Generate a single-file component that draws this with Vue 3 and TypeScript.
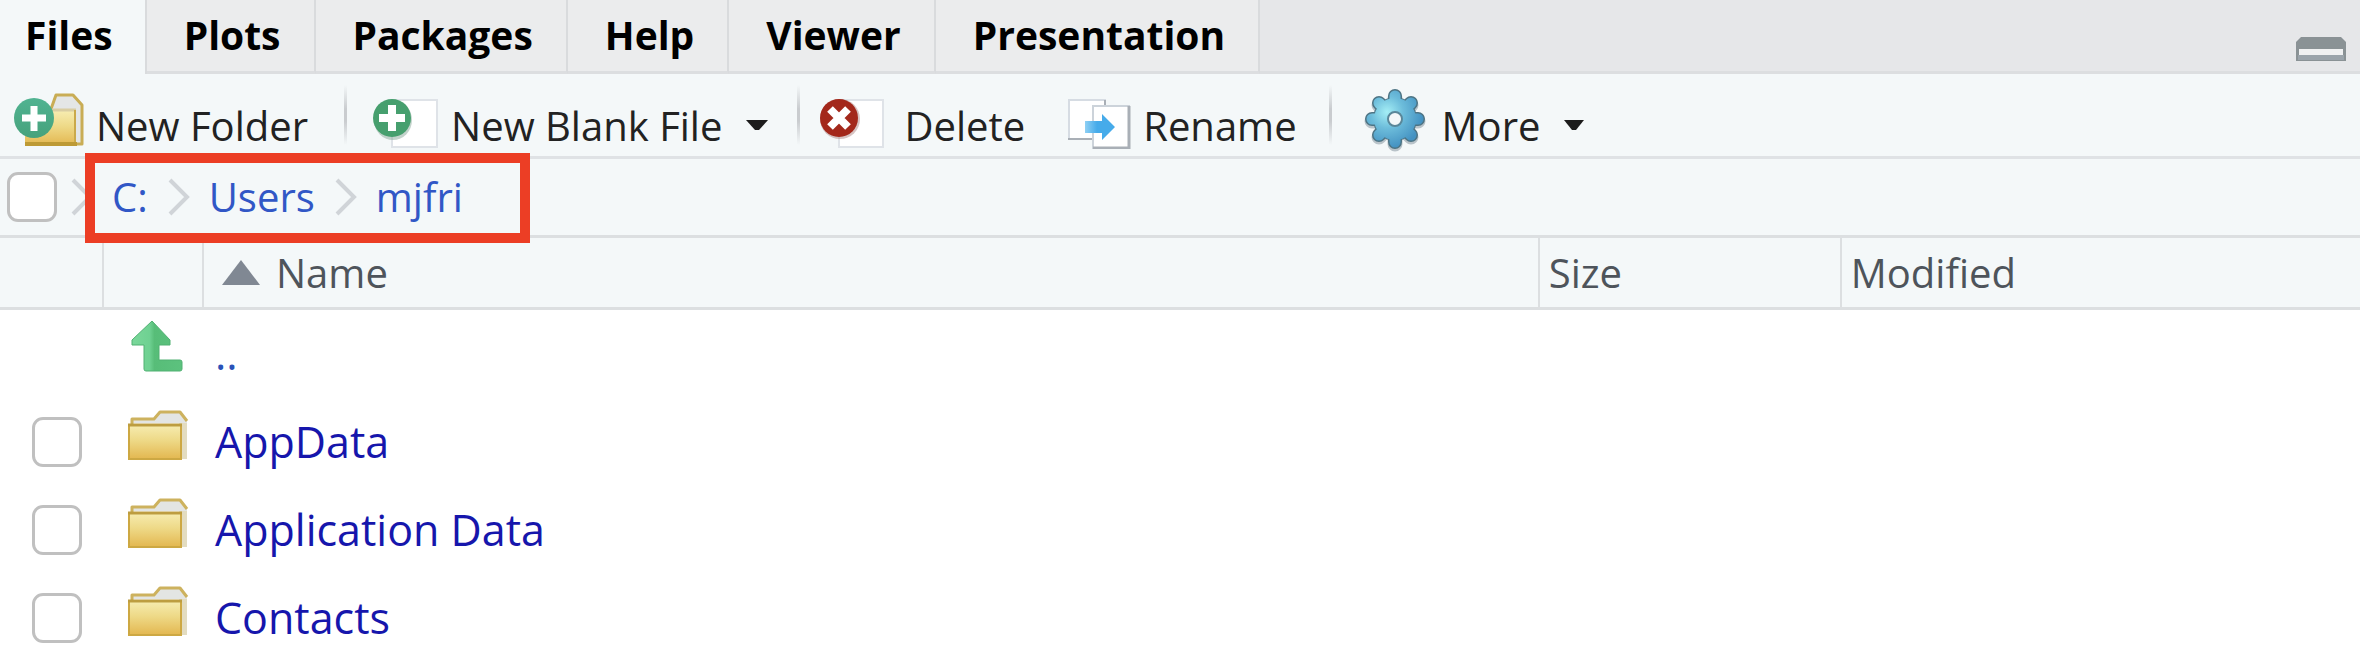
<script setup lang="ts">
import { ref } from 'vue'

interface Entry {
  name: string
  selected: boolean
}

const tabs = ['Files', 'Plots', 'Packages', 'Help', 'Viewer', 'Presentation']
const activeTab = ref('Files')
const crumbs = ['C:', 'Users', 'mjfri']
const selectAll = ref(false)
const entries = ref<Entry[]>([
  { name: 'AppData', selected: false },
  { name: 'Application Data', selected: false },
  { name: 'Contacts', selected: false },
])

function toggleAll() {
  entries.value.forEach((entry) => (entry.selected = selectAll.value))
}
</script>

<template>
  <main class="pane">
    <svg class="defs" width="0" height="0" aria-hidden="true">
      <defs>
        <linearGradient id="folderFill" x1="0" y1="0" x2="0" y2="1">
          <stop offset="0" stop-color="#f6ecb0" />
          <stop offset="0.45" stop-color="#eed987" />
          <stop offset="1" stop-color="#e3b750" />
        </linearGradient>
        <linearGradient id="greenBadge" x1="0" y1="0" x2="0" y2="1">
          <stop offset="0" stop-color="#50b391" />
          <stop offset="1" stop-color="#46a27c" />
        </linearGradient>
        <radialGradient id="gearFill" gradientUnits="userSpaceOnUse" cx="22" cy="24" r="36">
          <stop offset="0" stop-color="#a4eef5" />
          <stop offset="0.45" stop-color="#6dbddb" />
          <stop offset="1" stop-color="#4492c2" />
        </radialGradient>
        <linearGradient id="arrowFill" x1="0" y1="0" x2="1" y2="0">
          <stop offset="0" stop-color="#7ad79a" />
          <stop offset="0.35" stop-color="#6fd192" />
          <stop offset="0.45" stop-color="#57bd78" />
          <stop offset="1" stop-color="#5cc27e" />
        </linearGradient>
        <linearGradient id="blueArrow" x1="0" y1="0" x2="1" y2="0">
          <stop offset="0" stop-color="#8fd0f4" />
          <stop offset="0.4" stop-color="#46abea" />
          <stop offset="1" stop-color="#46abea" />
        </linearGradient>
      </defs>
    </svg>

    <header class="tabstrip">
      <nav class="tabs" role="tablist" aria-label="Panes">
        <button
          v-for="tab in tabs"
          :key="tab"
          type="button"
          role="tab"
          class="tab"
          :class="{ active: tab === activeTab }"
          :aria-selected="tab === activeTab"
          @click="activeTab = tab"
        >{{ tab }}</button>
      </nav>
      <button type="button" class="minimize" aria-label="Minimize">
        <svg width="52" height="26" viewBox="0 0 52 26">
          <path d="M1 25V6L6 1H46L51 6V25Z" fill="#8a9295" />
          <path d="M3 19H49V24H3Z" fill="#9ba4ab" />
          <path d="M4 13H48V19H4Z" fill="#f0f1f2" />
        </svg>
      </button>
    </header>

    <div class="toolbar" role="toolbar" aria-label="File actions">
      <button type="button" class="tool">
        <svg width="70" height="58" viewBox="0 0 70 58">
          <path d="M37 18L42 4H59L68 14V53H62" fill="#e4e6e6" stroke="#c9ad55" stroke-width="3" stroke-linejoin="round" />
          <path d="M38 18H62V54H38Z" fill="#e4dfc8" />
          <rect x="11" y="20" width="51" height="34" fill="url(#folderFill)" />
          <path d="M38 19H62" stroke="#d9cda2" stroke-width="3" />
          <path d="M61 19V54" stroke="#caa94a" stroke-width="2" />
          <path d="M11 53H63" stroke="#bd9a35" stroke-width="4" />
          <circle cx="20" cy="27" r="20" fill="url(#greenBadge)" />
          <path d="M20 15V40M8 27H32" stroke="#fff" stroke-width="7" />
        </svg>
        <span>New Folder</span>
      </button>

      <span class="divider" />

      <button type="button" class="tool menu">
        <svg width="68" height="58" viewBox="0 0 68 58">
          <rect x="21" y="9" width="45" height="47" fill="#fff" stroke="#dfe3e8" stroke-width="2" />
          <ellipse cx="22" cy="29" rx="19" ry="20" fill="#8aa79a" opacity="0.5" />
          <circle cx="21" cy="27" r="19" fill="#469f6e" />
          <path d="M21 14V40M8 27H34" stroke="#fff" stroke-width="8" />
        </svg>
        <span>New Blank File</span>
        <svg class="caret" width="22" height="12" viewBox="0 0 22 12"><path d="M0 1H22L13 11H9Z" fill="#1c1c1c" /></svg>
      </button>

      <span class="divider" />

      <button type="button" class="tool">
        <svg width="74" height="58" viewBox="0 0 74 58">
          <rect x="21" y="9" width="44" height="47" fill="#fff" stroke="#dfe3e8" stroke-width="2" />
          <ellipse cx="22" cy="28" rx="20" ry="20" fill="#b08a88" opacity="0.5" />
          <circle cx="21" cy="27" r="19" fill="#a3281b" />
          <path d="M12 18L30 36M30 18L12 36" stroke="#fff" stroke-width="8" />
        </svg>
        <span>Delete</span>
      </button>

      <button type="button" class="tool rename">
        <svg width="64" height="58" viewBox="0 0 64 58">
          <rect x="2" y="9" width="36" height="39" fill="#fff" stroke="#d6dce3" stroke-width="2" />
          <path d="M1 48H38V9" fill="none" stroke="#a9afb6" stroke-width="2" />
          <rect x="26" y="15" width="36" height="42" fill="#fff" stroke="#ccd3da" stroke-width="2" />
          <path d="M26 57H62V15" fill="none" stroke="#a9afb6" stroke-width="3" />
          <path d="M18 30H35V23L48 36L35 49V42H18Z" fill="url(#blueArrow)" />
        </svg>
        <span>Rename</span>
      </button>

      <span class="divider" />

      <button type="button" class="tool menu">
        <svg width="68" height="64" viewBox="-3 0 68 64">
          <g fill="none" stroke-linecap="round">
            <path d="M30 10V56M7 33H53M14 17L46 49M46 17L14 49" stroke="#b9c3c9" stroke-width="15" />
            <path d="M30 8V54M7 31H53M14 15L46 47M46 15L14 47" stroke="#4d7484" stroke-width="14" />
            <circle cx="30" cy="31" r="22" fill="#4d7484" />
            <path d="M30 8V54M7 31H53M14 15L46 47M46 15L14 47" stroke="url(#gearFill)" stroke-width="11" />
          </g>
          <circle cx="30" cy="31" r="21" fill="url(#gearFill)" />
          <circle cx="30" cy="31" r="7" fill="#f4f8f9" stroke="#5a8799" stroke-width="2" />
        </svg>
        <span>More</span>
        <svg class="caret" width="20" height="12" viewBox="0 0 20 12"><path d="M0 1H20L12 11H8Z" fill="#1c1c1c" /></svg>
      </button>
    </div>

    <nav class="path" aria-label="Path">
      <input v-model="selectAll" type="checkbox" class="box" aria-label="Select all" @change="toggleAll" />
      <ol class="crumbs">
        <li v-for="crumb in crumbs" :key="crumb">
          <svg class="chevron" width="22" height="38" viewBox="0 0 22 38">
            <path d="M2 2L19 19L2 36" fill="none" stroke="#d0d4d8" stroke-width="4" />
          </svg>
          <a href="#">{{ crumb }}</a>
        </li>
      </ol>
      <div class="highlight" />
    </nav>

    <table class="files">
      <colgroup>
        <col class="c-check" />
        <col class="c-icon" />
        <col class="c-name" />
        <col class="c-size" />
        <col />
      </colgroup>
      <thead>
        <tr>
          <th aria-label="Selected" />
          <th aria-label="Type" />
          <th class="name">
            <svg width="38" height="28" viewBox="0 0 38 28"><path d="M19 0L38 25H0Z" fill="#808893" /></svg>Name
          </th>
          <th>Size</th>
          <th>Modified</th>
        </tr>
      </thead>
      <tbody>
        <tr>
          <td />
          <td class="icon">
            <svg width="62" height="56" viewBox="0 0 62 56">
              <path
                d="M25 0L43 19V24H32V39H53Q55 39 55 41V48Q55 50 53 50H19Q17 50 17 48V24H5V19Z"
                fill="url(#arrowFill)" stroke="#51b173" stroke-width="1"
              />
            </svg>
          </td>
          <td colspan="3"><a href="#" class="up">..</a></td>
        </tr>
        <tr v-for="entry in entries" :key="entry.name">
          <td class="check">
            <input v-model="entry.selected" type="checkbox" class="box" :aria-label="entry.name" />
          </td>
          <td class="icon">
            <svg width="62" height="56" viewBox="0 0 62 56">
              <path d="M5 14V10H27L33 3H53L60 12V50H52V14Z" fill="#e3e5e3" />
              <path d="M53 14H60V50H53Z" fill="#e3dcc0" />
              <path d="M5 16V10H27L33 3H53L60 12" fill="none" stroke="#cdb25e" stroke-width="3" stroke-linejoin="round" />
              <rect x="2" y="16" width="52" height="34" fill="url(#folderFill)" stroke="#cda843" stroke-width="2" />
              <path d="M1 16H55" stroke="#bd9d40" stroke-width="3" />
            </svg>
          </td>
          <td><a href="#">{{ entry.name }}</a></td>
          <td />
          <td />
        </tr>
      </tbody>
    </table>
  </main>
</template>

<style>
html,
body {
  background: #fff;
}
</style>

<style scoped>
.pane {
  font-family: 'Open Sans', 'Noto Sans', sans-serif;
  font-size: 40px;
  color: #222;
  background: #fff;
  white-space: nowrap;
}

.defs {
  position: absolute;
}

button {
  font: inherit;
  color: inherit;
  background: none;
  border: 0;
  padding: 0;
  cursor: pointer;
}

a {
  text-decoration: none;
}

svg {
  display: block;
  flex: none;
}

.tabstrip {
  display: flex;
  justify-content: space-between;
  height: 74px;
  background: #e6e7e9;
}

.tabs {
  display: flex;
  flex: 1;
}

.tabs::after {
  content: '';
  flex: 1;
  border-bottom: 3px solid #dcdee0;
}

.tab {
  padding: 0 33px 2px 37px;
  font-size: 39px;
  font-weight: 700;
  color: #000;
  background: #ebeced;
  border-right: 2px solid #d9dbdd;
  border-bottom: 3px solid #dcdee0;
}

.tab.active {
  padding: 0 32px 5px 25px;
  background: #f4f8f9;
  border-bottom: 0;
}

.minimize {
  padding: 0 13px 9px;
  display: flex;
  align-items: flex-end;
  border-bottom: 3px solid #dcdee0;
}

.toolbar {
  display: flex;
  align-items: center;
  height: 85px;
  padding-left: 14px;
  background: #f4f8f9;
  border-bottom: 3px solid #dfe2e5;
  box-sizing: border-box;
}

.tool {
  display: flex;
  align-items: center;
  gap: 12px;
}

.tool svg {
  margin-top: 10px;
}

.tool span {
  line-height: 54px;
  margin-top: 22px;
}

.tool .caret {
  margin: 20px 0 0 12px;
}

.rename {
  margin-left: 42px;
}

.divider {
  width: 3px;
  height: 60px;
  margin: 0 24px 0 36px;
  background: linear-gradient(#f4f8f9, #c9cccf 40%, #c9cccf 60%, #f4f8f9);
}

.rename + .divider {
  margin: 0 30px 0 32px;
}

.menu + .divider {
  margin: 0 18px 0 29px;
}

.box {
  appearance: none;
  display: block;
  width: 50px;
  height: 50px;
  margin: 0;
  background: #fff;
  border: 3px solid #c0c0c0;
  border-radius: 11px;
}

.box:checked {
  background: #3b6fd6;
}

.path {
  position: relative;
  display: flex;
  align-items: center;
  height: 79px;
  padding-left: 7px;
  background: #f4f8f9;
  border-bottom: 3px solid #dcdfe1;
  box-sizing: border-box;
}

.crumbs {
  display: flex;
  gap: 20px;
  margin: 0 0 0 14px;
  padding: 0;
  list-style: none;
  line-height: 54px;
}

.crumbs li {
  display: flex;
  align-items: center;
  gap: 19px;
}

.crumbs a {
  color: #3157c6;
}

.highlight {
  position: absolute;
  left: 85px;
  top: -6px;
  width: 445px;
  height: 90px;
  border: 10px solid #ec3e25;
  box-sizing: border-box;
  pointer-events: none;
}

.files {
  width: 100%;
  table-layout: fixed;
  border-collapse: separate;
  border-spacing: 0;
}

.c-check {
  width: 104px;
}

.c-icon {
  width: 100px;
}

.c-name {
  width: 56.6%;
}

.c-size {
  width: 12.8%;
}

th {
  height: 72px;
  padding: 0 0 0 9px;
  box-sizing: border-box;
  font-weight: 400;
  text-align: left;
  color: #4e545b;
  background: #f4f8f9;
  border-right: 2px solid #dcdfe1;
  border-bottom: 3px solid #dcdfe1;
}

th:last-child {
  border-right: 0;
}

th.name {
  padding-left: 18px;
}

th.name svg {
  display: inline-block;
  margin-right: 16px;
}

td {
  height: 88px;
  padding: 0 0 0 11px;
  box-sizing: border-box;
  font-size: 43px;
  line-height: 60px;
}

td.check {
  padding-left: 32px;
}

td.icon {
  padding: 0 0 10px 23px;
}

td a {
  color: #1616ac;
}

td a.up {
  color: #2a52b8;
}
</style>
